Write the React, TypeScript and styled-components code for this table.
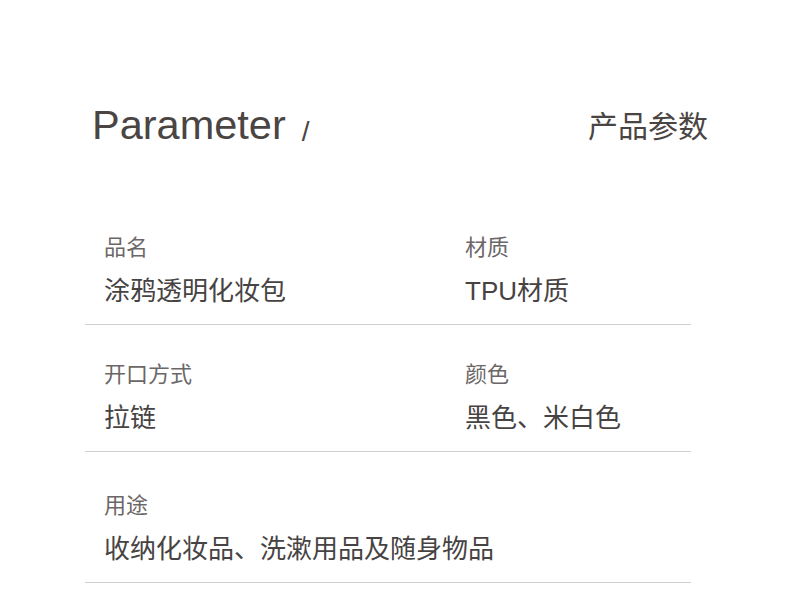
import styled, { createGlobalStyle } from 'styled-components'

const GlobalStyle = createGlobalStyle`
  body {
    margin: 0;
    background: #ffffff;
    font-family: "Liberation Sans", "Noto Sans CJK SC", sans-serif;
  }
`

const Page = styled.div`
  width: 790px;
  height: 614px;
  overflow: hidden;
  background: #ffffff;
`

const Header = styled.div`
  display: flex;
  justify-content: space-between;
  align-items: flex-start;
  margin: 104px 82px 0 92px;
`

const Title = styled.div`
  display: flex;
  align-items: flex-start;
  font-size: 41.5px;
  line-height: 41px;
  color: #4a4543;
`

const Slash = styled.span`
  font-size: 28px;
  line-height: 28px;
  margin: 14px 0 0 16px;
  color: #4a4543;
`

const Subtitle = styled.div`
  font-size: 30px;
  line-height: 30px;
  margin-top: 8px;
  color: #4a4543;
`

const Table = styled.div`
  width: 606px;
  margin: 53px 0 0 85px;
`

const Row = styled.div<{ $top: number }>`
  display: grid;
  grid-template-columns: 361px 1fr;
  padding: ${(p) => p.$top}px 0 20px;
  border-bottom: 1px solid #cfcfcf;
`

const Cell = styled.div<{ $wide?: boolean }>`
  display: flex;
  flex-direction: column;
  gap: 19px;
  padding-left: 19px;
  grid-column: ${(p) => (p.$wide ? '1 / -1' : 'auto')};
`

const Label = styled.div`
  font-size: 22px;
  line-height: 22px;
  color: #6b6767;
  white-space: nowrap;
`

const Value = styled.div`
  font-size: 26px;
  line-height: 26px;
  color: #474343;
  white-space: nowrap;
`

const rows = [
  { top: 38, cells: [['品名', '涂鸦透明化妆包'], ['材质', 'TPU材质']] },
  { top: 39, cells: [['开口方式', '拉链'], ['颜色', '黑色、米白色']] },
  { top: 43, cells: [['用途', '收纳化妆品、洗漱用品及随身物品']] },
]

const App = () => {
  return (
    <>
      <GlobalStyle />
      <Page>
        <Header>
          <Title>
            Parameter
            <Slash>/</Slash>
          </Title>
          <Subtitle>产品参数</Subtitle>
        </Header>
        <Table>
          {rows.map((row, i) => (
            <Row key={i} $top={row.top}>
              {row.cells.map(([label, value]) => (
                <Cell key={label} $wide={row.cells.length === 1}>
                  <Label>{label}</Label>
                  <Value>{value}</Value>
                </Cell>
              ))}
            </Row>
          ))}
        </Table>
      </Page>
    </>
  )
}

export default App
